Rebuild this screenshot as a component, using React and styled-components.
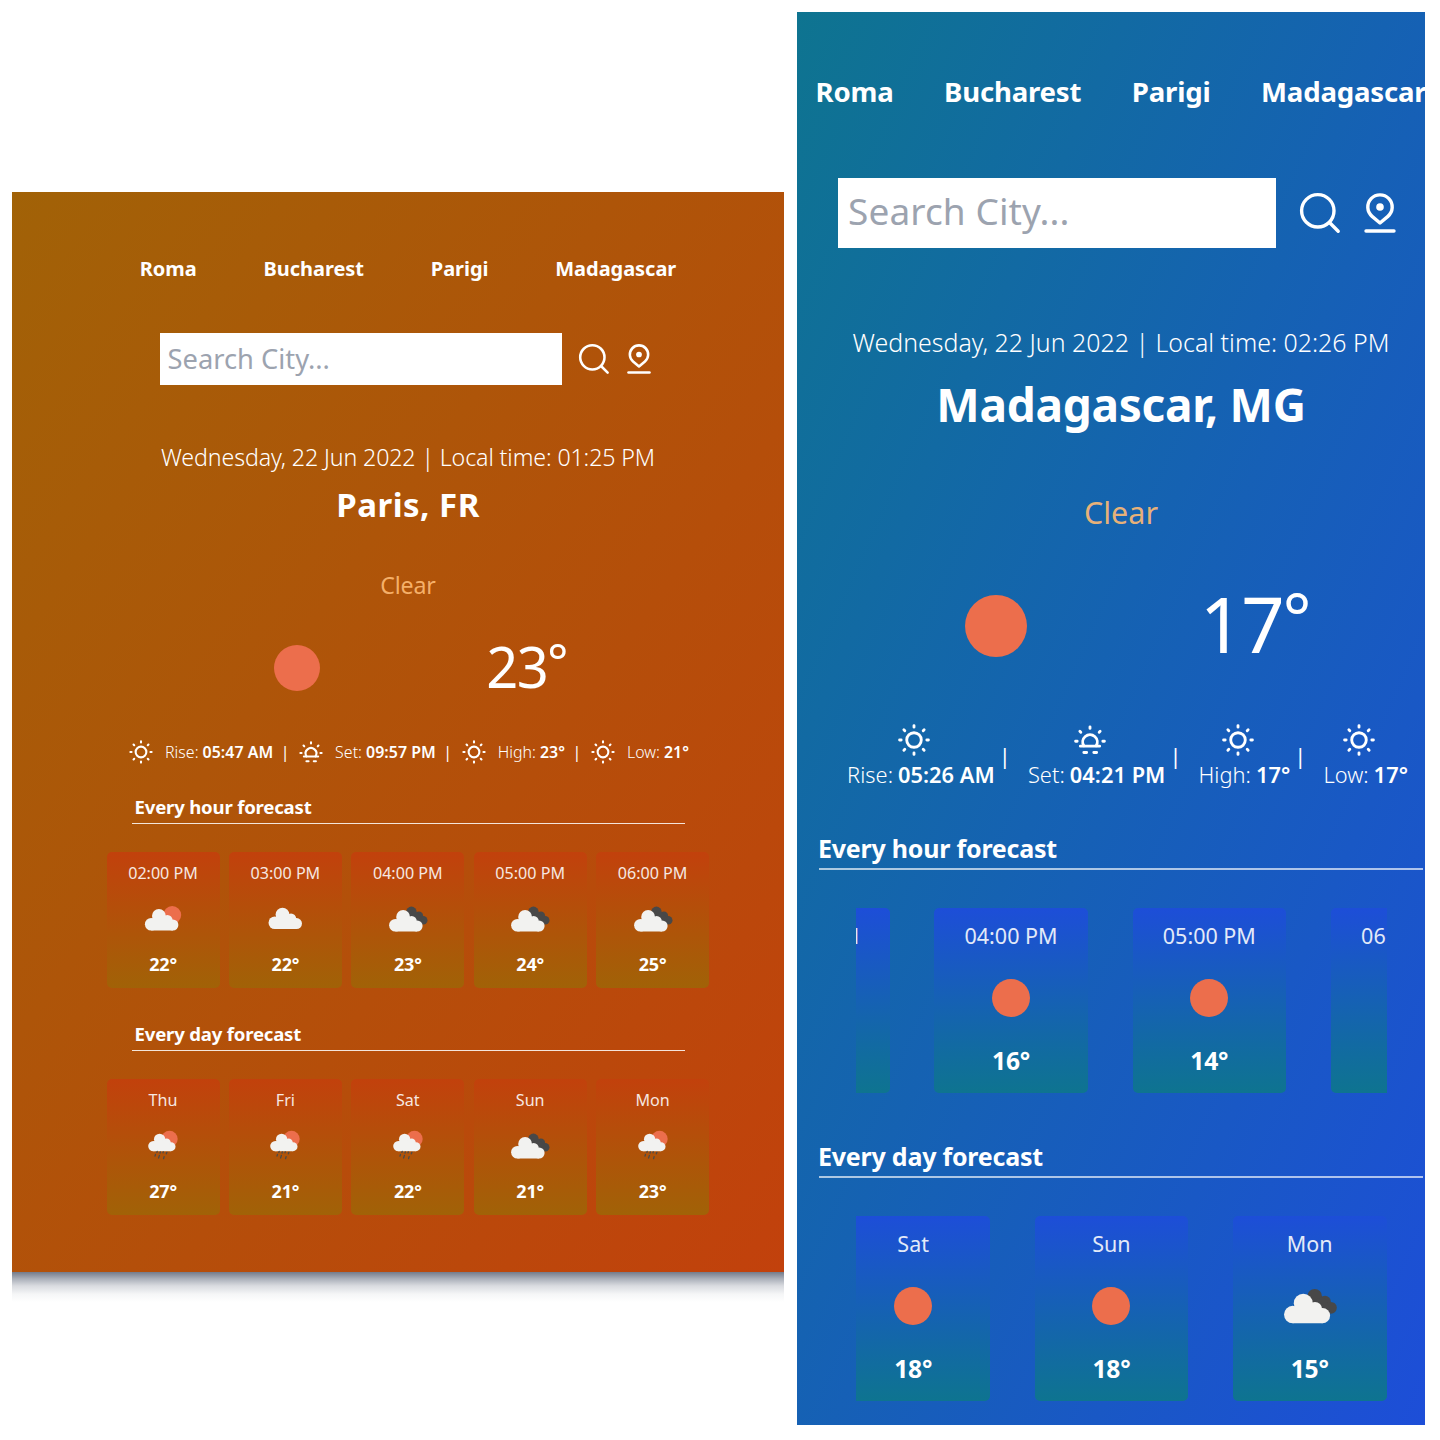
import React from "react";
import styled, { createGlobalStyle, ThemeProvider } from "styled-components";

const GlobalStyle = createGlobalStyle`
  *, *::before, *::after { box-sizing: border-box; }
  body {
    margin: 0;
    background: #fff;
    color: #fff;
    font-family: "Noto Sans", "Open Sans", sans-serif;
  }
`;

/* ---------- themes ---------- */

const warm = {
  panel: { width: 772, height: 1080, top: 180, pad: 62, from: "#a16207", to: "#c2410c" },
  nav: { height: 30, size: 20, gap: 66.8, spacing: "-0.04px" },
  search: { top: 49, width: 402, height: 52, pad: 8, lift: 2, size: 27.3, spacing: "0px", icon: 36, gap: 14, iconGap: 9 },
  date: { top: 54, height: 36, size: 23.2, spacing: "-0.12px" },
  city: { top: 6, height: 48, size: 33, spacing: "0.5px" },
  sky: { top: 38, height: 36, size: 23.2, spacing: "-0.2px" },
  now: { top: 25, height: 80, shift: 25, gap: 166, sun: 46, size: 56, spacing: "-1.5px", lift: 4 },
  facts: { top: 30, height: 28, size: 15.9, spacing: "0.05px", gap: 7.5, direction: "row", iconSize: 28, iconGap: 10, indent: 0, value: 4, lineHeight: 28 },
  title: { first: 28, next: 33, width: 553, height: 26, below: 3, size: 18.6, spacing: "-0.2px", indent: 3, line: "1px solid rgba(255, 255, 255, 0.85)" },
  cards: { top: 28, clip: 603, gap: 9.4, width: 113, height: 136, pad: 9, label: 24, labelSize: 16.1, icon: 48, above: 9.5, below: 9.5, tempSize: 18 },
};

const cool = {
  panel: { width: 628, height: 1413, top: 0, pad: 59, from: "#0e7490", to: "#1d4ed8" },
  nav: { height: 40, size: 27.6, gap: 50.5, spacing: "-0.2px" },
  search: { top: 67, width: 438, height: 70, pad: 10, lift: 5, size: 37, spacing: "0.1px", icon: 48, gap: 20, iconGap: 12 },
  date: { top: 76, height: 36, size: 24.9, spacing: "0.02px" },
  city: { top: 12, height: 64, size: 46, spacing: "-0.3px" },
  sky: { top: 56, height: 40, size: 30.5, spacing: "0px" },
  now: { top: 44, height: 100, shift: 32, gap: 173, sun: 62, size: 76, spacing: "-2px", lift: 4 },
  facts: { top: 45, height: 69, size: 21.8, spacing: "0.05px", gap: 4, direction: "column", iconSize: 38, iconGap: 1, indent: 13, value: 5, lineHeight: 30 },
  title: { first: 42, next: 47, width: 604, height: 32, below: 4, size: 25, spacing: "-0.22px", indent: -1, line: "2px solid rgba(255, 255, 255, 0.65)" },
  cards: { top: 38, clip: 531, gap: 44.8, width: 153.5, height: 185, pad: 12, label: 32, labelSize: 21.5, icon: 66, above: 12.5, below: 14, tempSize: 24.6 },
};

/* ---------- page ---------- */

const Page = styled.main`
  display: flex;
  align-items: flex-start;
  gap: 13px;
  width: 1440px;
  height: 1440px;
  padding: 12px;
  overflow: hidden;
`;

const Column = styled.div`
  flex: none;
  padding-top: ${({ theme }) => theme.panel.top}px;
`;

const Panel = styled.section`
  display: flex;
  flex-direction: column;
  align-items: center;
  width: ${({ theme }) => theme.panel.width}px;
  height: ${({ theme }) => theme.panel.height}px;
  padding: ${({ theme }) => theme.panel.pad}px 0 0 20px;
  overflow: hidden;
  background: linear-gradient(to bottom right, ${({ theme }) => theme.panel.from}, ${({ theme }) => theme.panel.to});
`;

const DropShade = styled.div`
  height: 30px;
  background: linear-gradient(#747b8a, #a9aeb8 22%, #d9dbe0 46%, #f5f6f7 74%, #fff);
`;

const Nav = styled.nav`
  display: flex;
  justify-content: center;
  gap: ${({ theme }) => theme.nav.gap}px;
`;

const City = styled.button`
  flex: none;
  padding: 0;
  border: 0;
  background: none;
  color: inherit;
  font: 700 ${({ theme }) => theme.nav.size}px / ${({ theme }) => theme.nav.height}px "Noto Sans", sans-serif;
  letter-spacing: ${({ theme }) => theme.nav.spacing};
`;

const SearchBar = styled.div`
  display: flex;
  align-items: center;
  margin-top: ${({ theme }) => theme.search.top}px;
`;

const SearchInput = styled.input`
  width: ${({ theme }) => theme.search.width}px;
  height: ${({ theme }) => theme.search.height}px;
  padding: 0 ${({ theme }) => theme.search.pad}px ${({ theme }) => theme.search.lift}px;
  margin-right: ${({ theme }) => theme.search.gap}px;
  border: 0;
  border-radius: 0;
  outline: 0;
  background: #fff;
  font: 400 ${({ theme }) => theme.search.size}px "Noto Sans", sans-serif;
  letter-spacing: ${({ theme }) => theme.search.spacing};
  &::placeholder { color: #9ca3af; opacity: 1; }
`;

const SearchIcons = styled.div`
  display: flex;
  gap: ${({ theme }) => theme.search.iconGap}px;
  svg {
    display: block;
    width: ${({ theme }) => theme.search.icon}px;
    height: ${({ theme }) => theme.search.icon}px;
  }
`;

const DateLine = styled.p`
  margin: ${({ theme }) => theme.date.top}px 0 0;
  font-size: ${({ theme }) => theme.date.size}px;
  line-height: ${({ theme }) => theme.date.height}px;
  letter-spacing: ${({ theme }) => theme.date.spacing};
  font-weight: 300;
  white-space: nowrap;
`;

const CityName = styled.h1`
  margin: ${({ theme }) => theme.city.top}px 0 0;
  font-size: ${({ theme }) => theme.city.size}px;
  line-height: ${({ theme }) => theme.city.height}px;
  letter-spacing: ${({ theme }) => theme.city.spacing};
  font-weight: 700;
`;

const Sky = styled.p`
  margin: ${({ theme }) => theme.sky.top}px 0 0;
  color: rgba(253, 186, 116, 0.92);
  font-size: ${({ theme }) => theme.sky.size}px;
  line-height: ${({ theme }) => theme.sky.height}px;
  letter-spacing: ${({ theme }) => theme.sky.spacing};
  font-weight: 400;
`;

const Now = styled.div`
  display: flex;
  align-items: center;
  gap: ${({ theme }) => theme.now.gap}px;
  height: ${({ theme }) => theme.now.height}px;
  margin-top: ${({ theme }) => theme.now.top}px;
  padding-left: ${({ theme }) => theme.now.shift}px;
`;

const SunDisc = styled.span`
  width: ${({ theme }) => theme.now.sun}px;
  height: ${({ theme }) => theme.now.sun}px;
  border-radius: 50%;
  background: #ec6e4c;
`;

const NowTemp = styled.span`
  padding-bottom: ${({ theme }) => theme.now.lift}px;
  font-size: ${({ theme }) => theme.now.size}px;
  line-height: 1;
  letter-spacing: ${({ theme }) => theme.now.spacing};
`;

const Degree = styled.span`
  font-size: 0.88em;
  line-height: 0;
  vertical-align: 0.16em;
`;

const Facts = styled.div`
  display: flex;
  align-items: center;
  gap: ${({ theme }) => theme.facts.gap}px;
  height: ${({ theme }) => theme.facts.height}px;
  margin-top: ${({ theme }) => theme.facts.top}px;
  font-size: ${({ theme }) => theme.facts.size}px;
  line-height: ${({ theme }) => theme.facts.lineHeight}px;
  letter-spacing: ${({ theme }) => theme.facts.spacing};
  white-space: nowrap;
`;

const Fact = styled.div`
  display: flex;
  flex: none;
  flex-direction: ${({ theme }) => theme.facts.direction};
  align-items: center;
  gap: ${({ theme }) => theme.facts.iconGap}px;
  svg {
    display: block;
    width: ${({ theme }) => theme.facts.iconSize}px;
    height: ${({ theme }) => theme.facts.iconSize}px;
  }
`;

const FactText = styled.span`
  display: flex;
  gap: ${({ theme }) => theme.facts.value}px;
  padding-left: ${({ theme }) => theme.facts.indent}px;
`;

const FactLabel = styled.span`
  font-weight: 300;
`;

const FactValue = styled.span`
  font-weight: 600;
`;

const SectionTitle = styled.h2`
  width: ${({ theme }) => theme.title.width}px;
  margin: ${({ theme, $first }) => ($first ? theme.title.first : theme.title.next)}px 0 0;
  padding-bottom: ${({ theme }) => theme.title.below}px;
  border-bottom: ${({ theme }) => theme.title.line};
  font-size: ${({ theme }) => theme.title.size}px;
  line-height: ${({ theme }) => theme.title.height}px;
  letter-spacing: ${({ theme }) => theme.title.spacing};
  text-indent: ${({ theme }) => theme.title.indent}px;
  font-weight: 700;
`;

const Strip = styled.div`
  display: flex;
  flex: none;
  justify-content: ${({ $end }) => ($end ? "flex-end" : "flex-start")};
  width: ${({ theme }) => theme.cards.clip}px;
  margin-top: ${({ theme }) => theme.cards.top}px;
  overflow: hidden;
`;

const Track = styled.div`
  display: flex;
  flex: none;
  gap: ${({ theme }) => theme.cards.gap}px;
  margin-left: ${({ $scrolled = 0 }) => -$scrolled}px;
`;

const Card = styled.article`
  display: flex;
  flex: none;
  flex-direction: column;
  align-items: center;
  width: ${({ theme }) => theme.cards.width}px;
  height: ${({ theme }) => theme.cards.height}px;
  padding-top: ${({ theme }) => theme.cards.pad}px;
  border-radius: 5px;
  background: linear-gradient(${({ theme }) => theme.panel.to}, ${({ theme }) => theme.panel.from});
  svg {
    display: block;
    width: ${({ theme }) => theme.cards.icon}px;
    height: ${({ theme }) => theme.cards.icon}px;
    margin: ${({ theme }) => `${theme.cards.above}px 0 ${theme.cards.below}px`};
  }
`;

const CardLabel = styled.span`
  font-size: ${({ theme }) => theme.cards.labelSize}px;
  line-height: ${({ theme }) => theme.cards.label}px;
  opacity: 0.88;
`;

const CardTemp = styled.span`
  font-size: ${({ theme }) => theme.cards.tempSize}px;
  line-height: ${({ theme }) => theme.cards.label}px;
  font-weight: 700;
  letter-spacing: -0.2px;
`;

/* ---------- icons ---------- */

const Stroke = styled.svg.attrs({ viewBox: "0 0 24 24" })`
  fill: none;
  stroke: #fff;
  stroke-width: ${({ $w = 1.8 }) => $w};
  stroke-linecap: round;
  stroke-linejoin: round;
`;

const SearchIcon = () => (
  <Stroke $w={1.7}>
    <circle cx="10.9" cy="10.9" r="8.1" />
    <path d="M17 17l4.1 4.1" />
  </Stroke>
);

const PinIcon = () => (
  <Stroke $w={1.7}>
    <path d="M12 17L8.04 13.67A6.1 6.1 0 1 1 15.96 13.67Z" />
    <path d="M5 21h14" />
    <circle cx="12" cy="9" r="1.9" fill="#fff" stroke="none" />
  </Stroke>
);

const SunIcon = () => (
  <Stroke $w={1.8}>
    <circle cx="12" cy="12" r="4.6" />
    <path d="M12 2.9v1M12 20.1v1M2.9 12h1M20.1 12h1M5.6 5.6l.6.6M17.8 17.8l.6.6M5.6 18.4l.6-.6M17.8 6.2l.6-.6" />
  </Stroke>
);

const SunsetIcon = () => (
  <Stroke $w={1.8}>
    <path d="M8.1 15.7A4.6 4.6 0 1 1 15.9 15.7" />
    <path d="M5.9 15.9h12.2M8.1 19.9h1.8M14.4 19.9h1.8" />
    <path d="M12 3.7v1M2.9 12.8h1M20.1 12.8h1M5.6 6.5l.6.6M17.8 7.1l.6-.6" />
  </Stroke>
);

const Cloud = ({ move }) => (
  <g fill="#f2f2f0" transform={move}>
    <circle cx="11.4" cy="30.2" r="6.3" />
    <circle cx="19.1" cy="22" r="6.9" />
    <circle cx="27.6" cy="26.2" r="5.2" />
    <circle cx="33.1" cy="31" r="5.5" />
    <path d="M11.4 36.5h21.7V30L28 24l-10-2-6.6 3z" />
  </g>
);

const weather = {
  clear: <circle cx="24" cy="24" r="13.8" fill="#ec6e4c" />,
  few: (
    <>
      <circle cx="33.2" cy="20" r="9" fill="#ec6e4c" />
      <Cloud move="translate(.8 -1)" />
    </>
  ),
  cloud: <Cloud move="translate(2.4 -2.4)" />,
  broken: (
    <>
      <g fill="#484848">
        <circle cx="27.4" cy="16.9" r="5.3" />
        <circle cx="34.9" cy="20.8" r="4.2" />
        <circle cx="39.2" cy="25.3" r="4.3" />
        <path d="M27 20l6-3 4 5 1 7-5-1z" />
      </g>
      <Cloud />
    </>
  ),
  rain: (
    <>
      <circle cx="30.5" cy="17" r="8.2" fill="#ec6e4c" />
      <Cloud move="translate(5.04 -.6) scale(.815)" />
      <path
        d="M18.2 29.4l-.4 1M16.5 32.4l-.5 1.8M21.3 30l-.3 1.2M20.4 33.4l-.8 2.6M27.9 30.3l-.6 1.5M25.1 34.6l-.5 2M24.3 29.8l-.3 1"
        stroke="#4a4a48"
        strokeWidth="1.3"
        strokeLinecap="round"
      />
    </>
  ),
};

const WeatherIcon = ({ kind }) => <svg viewBox="0 0 48 48">{weather[kind]}</svg>;

/* ---------- sections ---------- */

const cities = ["Roma", "Bucharest", "Parigi", "Madagascar"];

function Forecast({ title, items, first, scrolled, end }) {
  return (
    <>
      <SectionTitle $first={first}>{title}</SectionTitle>
      <Strip $end={end}>
        <Track $scrolled={scrolled}>
          {items.map(([label, kind, temp]) => (
            <Card key={label}>
              <CardLabel>{label}</CardLabel>
              <WeatherIcon kind={kind} />
              <CardTemp>{temp}°</CardTemp>
            </Card>
          ))}
        </Track>
      </Strip>
    </>
  );
}

function Weather({ data }) {
  const facts = [
    ["Rise:", data.rise, SunIcon],
    ["Set:", data.set, SunsetIcon],
    ["High:", `${data.high}°`, SunIcon],
    ["Low:", `${data.low}°`, SunIcon],
  ];
  return (
    <Panel>
      <Nav>
        {cities.map((city) => (
          <City key={city}>{city}</City>
        ))}
      </Nav>
      <SearchBar>
        <SearchInput placeholder="Search City..." />
        <SearchIcons>
          <SearchIcon />
          <PinIcon />
        </SearchIcons>
      </SearchBar>
      <DateLine>Wednesday, 22 Jun 2022 | Local time: {data.time}</DateLine>
      <CityName>{data.city}</CityName>
      <Sky>Clear</Sky>
      <Now>
        <SunDisc />
        <NowTemp>
          {data.temp}
          <Degree>°</Degree>
        </NowTemp>
      </Now>
      <Facts>
        {facts.map(([label, value, Icon], i) => (
          <React.Fragment key={label}>
            {i > 0 && <span>|</span>}
            <Fact>
              <Icon />
              <FactText>
                <FactLabel>{label}</FactLabel>
                <FactValue>{value}</FactValue>
              </FactText>
            </Fact>
          </React.Fragment>
        ))}
      </Facts>
      <Forecast first title="Every hour forecast" items={data.hours} scrolled={data.scrolled} />
      <Forecast title="Every day forecast" items={data.days} end={data.daysAtEnd} />
    </Panel>
  );
}

const paris = {
  city: "Paris, FR", time: "01:25 PM", temp: 23, rise: "05:47 AM", set: "09:57 PM", high: 23, low: 21,
  hours: [
    ["02:00 PM", "few", 22],
    ["03:00 PM", "cloud", 22],
    ["04:00 PM", "broken", 23],
    ["05:00 PM", "broken", 24],
    ["06:00 PM", "broken", 25],
  ],
  days: [
    ["Thu", "rain", 27],
    ["Fri", "rain", 21],
    ["Sat", "rain", 22],
    ["Sun", "broken", 21],
    ["Mon", "rain", 23],
  ],
};

const madagascar = {
  city: "Madagascar, MG", time: "02:26 PM", temp: 17, rise: "05:26 AM", set: "04:21 PM", high: 17, low: 17,
  scrolled: 119.5,
  daysAtEnd: true,
  hours: [
    ["03:00 PM", "clear", 17],
    ["04:00 PM", "clear", 16],
    ["05:00 PM", "clear", 14],
    ["06:00 PM", "clear", 13],
  ],
  days: [
    ["Sat", "clear", 18],
    ["Sun", "clear", 18],
    ["Mon", "broken", 15],
  ],
};

export default function App() {
  return (
    <>
      <GlobalStyle />
      <Page>
        <ThemeProvider theme={warm}>
          <Column>
            <Weather data={paris} />
            <DropShade />
          </Column>
        </ThemeProvider>
        <ThemeProvider theme={cool}>
          <Column>
            <Weather data={madagascar} />
          </Column>
        </ThemeProvider>
      </Page>
    </>
  );
}
